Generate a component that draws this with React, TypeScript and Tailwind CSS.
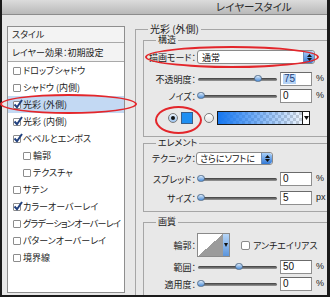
import React from 'react';

const jp = "font-['Noto_Sans_CJK_JP',sans-serif] [font-feature-settings:'palt']";
const num = "font-['Liberation_Sans',Arial,sans-serif]";

const items = [
  { label: 'ドロップシャドウ' },
  { label: 'シャドウ (内側)' },
  { label: '光彩 (外側)', on: true, sel: true },
  { label: '光彩 (内側)', on: true },
  { label: 'ベベルとエンボス', on: true },
  { label: '輪郭', indent: true },
  { label: 'テクスチャ', indent: true },
  { label: 'サテン' },
  { label: 'カラーオーバーレイ', on: true },
  { label: 'グラデーションオーバーレイ', tight: true },
  { label: 'パターンオーバーレイ' },
  { label: '境界線' },
];

function Check({ on }: { on?: boolean }) {
  return (
    <span className="relative w-[8px] h-[8px] border border-[#8c8c8c] bg-white rounded-[1px] shrink-0">
      {on && (
        <svg className="absolute -left-[1px] -top-[3px]" width="10" height="10" viewBox="0 0 10 10">
          <path d="M1.5 5.5 L4 8.2 L9 1" stroke="#21407e" strokeWidth="2" fill="none" />
        </svg>
      )}
    </span>
  );
}

function Stepper() {
  return (
    <span className="h-full w-[11px] rounded-r-[3px] bg-gradient-to-b from-[#a9cff7] to-[#2f78d6] border-l border-[#6d8db8] flex flex-col items-center justify-center gap-[1px]">
      <svg width="5" height="3" viewBox="0 0 5 3"><path d="M0 3 L2.5 0 L5 3Z" fill="#111" /></svg>
      <svg width="5" height="3" viewBox="0 0 5 3"><path d="M0 0 L2.5 3 L5 0Z" fill="#111" /></svg>
    </span>
  );
}

function Slider({ thumb }: { thumb: string }) {
  return (
    <div className="relative ml-[2px] w-[79px] h-[3px] rounded-full bg-gradient-to-b from-[#3d3d3d] to-[#9c9c9c]">
      <span className={`absolute -top-[3px] w-[8px] h-[7px] rounded-full border border-[#55708f] bg-gradient-to-b from-[#d8e8f8] to-[#4e8fd8] ${thumb}`} />
    </div>
  );
}

function NumBox({ value, hl }: { value: string; hl?: boolean }) {
  return (
    <div className={`ml-[3px] w-[32px] h-[14px] bg-white border border-[#8f8f8f] border-t-[#6b6b6b] flex items-center pl-[2px] text-[10px] leading-none text-[#111] ${num}`}>
      <span className={hl ? 'bg-[#b5d3f6] px-[1px] text-[#1d3f78]' : ''}>{value}</span>
    </div>
  );
}

function Row({ label, className, children }: { label: string; className?: string; children: React.ReactNode }) {
  return (
    <div className={`flex items-center ${className ?? ''}`}>
      <span className={`w-[52px] text-right text-[9px] leading-none text-[#1b1b1b] ${jp}`}>{label}</span>
      {children}
    </div>
  );
}

function SliderRow({ label, thumb, value, unit, hl, className }: { label: string; thumb: string; value: string; unit: string; hl?: boolean; className?: string }) {
  return (
    <Row label={label} className={className}>
      <Slider thumb={thumb} />
      <NumBox value={value} hl={hl} />
      <span className={`ml-[4px] text-[9px] text-[#222] ${num}`}>{unit}</span>
    </Row>
  );
}

function Radio({ on }: { on?: boolean }) {
  return (
    <span className={`w-[10px] h-[10px] rounded-full border border-[#7b7b7b] flex items-center justify-center shrink-0 ${on ? 'bg-gradient-to-b from-[#e9f2fc] to-[#9cc3ee]' : 'bg-gradient-to-b from-white to-[#e2e2e2]'}`}>
      {on && <span className="w-[4px] h-[4px] rounded-full bg-[#111]" />}
    </span>
  );
}

export default function App() {
  return (
    <div className={`relative w-[330px] h-[297px] bg-[#e8e8e8] border-l-2 border-r-[3px] border-b-2 border-[#1b1b1b] flex flex-col ${jp}`}>
      <div className="h-[15px] shrink-0 bg-gradient-to-b from-[#dcdcdc] to-[#b9b9b9] border-b border-[#8c8c8c] pl-[214px] flex items-center">
        <span className="text-[10.5px] leading-none text-[#2a2a2a]">レイヤースタイル</span>
      </div>

      <div className="flex flex-1 overflow-hidden">
        {/* style list */}
        <div className="ml-[5px] mt-[11px] w-[118px] h-[267px] shrink-0 bg-white border border-[#8e8e8e] text-[9px] leading-none text-[#1b1b1b]">
          <div className="h-[16px] flex items-center pl-[4px] bg-[#f3f3f3] border-b border-[#a9a9a9]">スタイル</div>
          <div className="h-[19px] flex items-center pl-[4px] bg-[#f3f3f3] border-b border-[#a9a9a9]">レイヤー効果：初期設定</div>
          {items.map((it) => (
            <div
              key={it.label}
              className={`h-[17px] flex items-center gap-[2px] whitespace-nowrap ${it.indent ? 'pl-[15px]' : 'pl-[5px]'} ${it.sel ? 'bg-[#c3d9f3]' : ''}`}
            >
              <Check on={it.on} />
              <span className={it.tight ? 'tracking-[-0.7px]' : ''}>{it.label}</span>
            </div>
          ))}
        </div>

        {/* settings */}
        <div className="ml-[10px] mt-[9px] w-[220px] shrink-0">
          <fieldset className="border-t border-l border-[#a6a6a6] pl-[7px]">
            <legend className="ml-[5px] px-[2px] text-[10px] leading-[10px] text-[#1b1b1b]">光彩 (外側)</legend>

            {/* 構造 */}
            <fieldset className="mt-[1px] border-t border-l border-b border-[#a6a6a6] pb-[11px]">
              <legend className="ml-[12px] px-[2px] text-[9px] leading-[10px] text-[#1b1b1b]">構造</legend>
              <Row label="描画モード：" className="mt-[5px]">
                <div className="ml-[1px] w-[118px] h-[14px] bg-white border border-[#8a8a8a] rounded-[3px] flex items-center justify-between overflow-hidden">
                  <span className="pl-[4px] text-[9px] leading-none text-[#111]">通常</span>
                  <Stepper />
                </div>
              </Row>
              <SliderRow label="不透明度：" thumb="left-[56px]" value="75" unit="%" hl className="mt-[8px]" />
              <SliderRow label="ノイズ：" thumb="left-[-1px]" value="0" unit="%" className="mt-[3px]" />
              <div className="mt-[8px] flex items-center pl-[24px]">
                <Radio on />
                <span className="ml-[3px] w-[12px] h-[12px] bg-[#1f8ff2] border border-[#3a5f8a]" />
                <span className="ml-[11px]"><Radio /></span>
                <div className="ml-[3px] w-[93px] h-[14px] border border-[#1a1a1a] flex justify-end [background-image:linear-gradient(to_right,#1677f0,rgba(22,119,240,0)),repeating-conic-gradient(#d2d2d2_0_25%,#ffffff_0_50%)] [background-size:100%_100%,6px_6px]">
                  <span className="w-[7px] h-full bg-white border-l border-[#1a1a1a] flex items-center justify-center">
                    <svg width="5" height="4" viewBox="0 0 5 4"><path d="M0 0 L2.5 4 L5 0Z" fill="#111" /></svg>
                  </span>
                </div>
              </div>
            </fieldset>

            {/* エレメント */}
            <fieldset className="mt-[1px] border-t border-l border-b border-[#a6a6a6] pb-[6px]">
              <legend className="ml-[12px] px-[2px] text-[9px] leading-[10px] text-[#1b1b1b]">エレメント</legend>
              <Row label="テクニック：" className="mt-[4px]">
                <div className="w-[77px] h-[13px] bg-white border border-[#8a8a8a] rounded-[3px] flex items-center justify-between overflow-hidden">
                  <span className="pl-[3px] text-[9px] leading-none text-[#111]">さらにソフトに</span>
                  <Stepper />
                </div>
              </Row>
              <SliderRow label="スプレッド：" thumb="left-[-1px]" value="0" unit="%" className="mt-[7px]" />
              <SliderRow label="サイズ：" thumb="left-[-1px]" value="5" unit="px" className="mt-[5px]" />
            </fieldset>

            {/* 画質 */}
            <fieldset className="mt-[5px] border-t border-l border-[#a6a6a6] pb-[6px]">
              <legend className="ml-[12px] px-[2px] text-[9px] leading-[10px] text-[#1b1b1b]">画質</legend>
              <Row label="輪郭：" className="mt-[6px]">
                <div className="ml-[1px] h-[24px] flex border border-[#8a8a8a]">
                  <span className="w-[25px] h-full [background-image:linear-gradient(to_bottom_right,#ffffff_50%,#9b9b9b_50%)]" />
                  <span className="w-[6px] h-full bg-gradient-to-b from-[#b7d6f7] to-[#5b95dc] flex items-center justify-center">
                    <svg width="4" height="4" viewBox="0 0 4 4"><path d="M0 0 L2 4 L4 0Z" fill="#111" /></svg>
                  </span>
                </div>
                <span className="ml-[11px] w-[9px] h-[9px] bg-white border border-[#8a8a8a] rounded-[2px]" />
                <span className="ml-[3px] text-[9px] leading-none text-[#1b1b1b]">アンチエイリアス</span>
              </Row>
              <SliderRow label="範囲：" thumb="left-[37px]" value="50" unit="%" className="mt-[3px]" />
              <SliderRow label="適用度：" thumb="left-[-1px]" value="0" unit="%" className="mt-[3px]" />
            </fieldset>
          </fieldset>
        </div>
      </div>

      {/* red annotation marks */}
      <span className="absolute left-[-2px] top-[94px] w-[137px] h-[20px] rounded-[50%] border-2 border-[#e3262b]" />
      <span className="absolute left-[143px] top-[46px] w-[174px] h-[22px] rounded-[50%] border-2 border-[#e3262b]" />
      <span className="absolute left-[153px] top-[106px] w-[47px] h-[28px] rounded-[50%] border-2 border-[#e3262b]" />
    </div>
  );
}
